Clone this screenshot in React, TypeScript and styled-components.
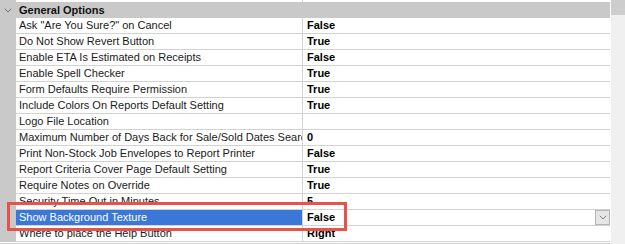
import React from "react";
import styled, { createGlobalStyle } from "styled-components";

const GlobalStyle = createGlobalStyle`
	body {
		margin: 0;
		background: #ffffff;
		font-family: "Liberation Sans", Arial, sans-serif;
	}
`;

//Window
const Frame = styled.div`
	position: relative;
	display: flex;
	width: 625px;
	height: 244px;
	overflow: hidden;
	background-color: #FFFFFF;
`;

const Grid = styled.div`
	display: flex;
	flex-direction: column;
	width: 610px;
	border-right: 1px solid #ffffff;
`;

const TopStrip = styled.div`
	display: flex;
	height: 2px;
	& > div:first-child {
		width: 16px;
		background: #c9c9c9;
	}
	& > div:last-child {
		width: 286px;
		border-right: 1px solid #d2d2d2;
	}
`;

const Category = styled.div`
	display: flex;
	align-items: center;
	height: 16px;
	background: #c9c9c9;
	font-size: 11px;
	font-weight: bold;
	color: #111111;
`;

const Chevron = styled.div`
	width: 16px;
	display: flex;
	justify-content: center;
	align-items: center;
`;

const Row = styled.div`
	display: flex;
	height: 16px;
	font-size: 11px;
`;

const Margin = styled.div`
	width: 16px;
	flex-shrink: 0;
	background: #c9c9c9;
`;

const Name = styled.div<{ $selected?: boolean }>`
	width: 283px;
	padding-left: 3px;
	flex-shrink: 0;
	line-height: 15px;
	white-space: nowrap;
	overflow: hidden;
	color: ${(p) => (p.$selected ? "#ffffff" : "#1a1a1a")};
	background: ${(p) => (p.$selected ? "#3a77d6" : "#ffffff")};
	border-bottom: 1px solid #d2d2d2;
`;

const Value = styled.div`
	display: flex;
	justify-content: space-between;
	flex: 1;
	padding-left: 4px;
	line-height: 15px;
	font-weight: bold;
	color: #000000;
	border-left: 1px solid #d2d2d2;
	border-bottom: 1px solid #d2d2d2;
`;

const DropButton = styled.div`
	width: 15px;
	height: 15px;
	box-sizing: border-box;
	display: flex;
	align-items: center;
	justify-content: center;
	background: #e5e5e5;
	border: 1px solid #b4b4b4;
`;

const BottomBar = styled.div`
	flex: 1;
	background: #d0d0d0;
	border-top: 1px solid #ffffff;
`;

const Scrollbar = styled.div`
	flex: 1;
	display: flex;
	flex-direction: column;
	background: #f0f0f0;
`;

const Thumb = styled.div`
	height: 15px;
	background: #cdcdcd;
`;

const Callout = styled.div`
	position: absolute;
	left: 7px;
	top: 202px;
	width: 334px;
	height: 23px;
	border: 3px solid #e5534b;
	pointer-events: none;
`;

const rows: [string, string][] = [
	['Ask "Are You Sure?" on Cancel', "False"],
	["Do Not Show Revert Button", "True"],
	["Enable ETA Is Estimated on Receipts", "False"],
	["Enable Spell Checker", "True"],
	["Form Defaults Require Permission", "True"],
	["Include Colors On Reports Default Setting", "True"],
	["Logo File Location", ""],
	["Maximum Number of Days Back for Sale/Sold Dates Search", "0"],
	["Print Non-Stock Job Envelopes to Report Printer", "False"],
	["Report Criteria Cover Page Default Setting", "True"],
	["Require Notes on Override", "True"],
	["Security Time Out in Minutes", "5"],
	["Show Background Texture", "False"],
	["Where to place the Help Button", "Right"],
];

const Down = ({ color, size }: { color: string; size: number }) => (
	<svg width={size} height={size * 0.6} viewBox="0 0 10 6">
		<path d="M1 1 L5 5 L9 1" fill="none" stroke={color} strokeWidth="1.2" />
	</svg>
);

export default function App() {
	return (
		<>
			<GlobalStyle />
			<Frame>
				<Grid>
					<TopStrip>
						<div />
						<div />
					</TopStrip>
					<Category>
						<Chevron>
							<Down color="#6a6a6a" size={8} />
						</Chevron>
						<span style={{ paddingLeft: 3 }}>General Options</span>
					</Category>
					{rows.map(([name, value]) => {
						const selected = name === "Show Background Texture";
						return (
							<Row key={name}>
								<Margin />
								<Name $selected={selected}>{name}</Name>
								<Value>
									<span>{value}</span>
									{selected && (
										<DropButton>
											<Down color="#777777" size={8} />
										</DropButton>
									)}
								</Value>
							</Row>
						);
					})}
					<BottomBar />
				</Grid>
				<Scrollbar>
					<Thumb />
				</Scrollbar>
				<Callout />
			</Frame>
		</>
	);
}
